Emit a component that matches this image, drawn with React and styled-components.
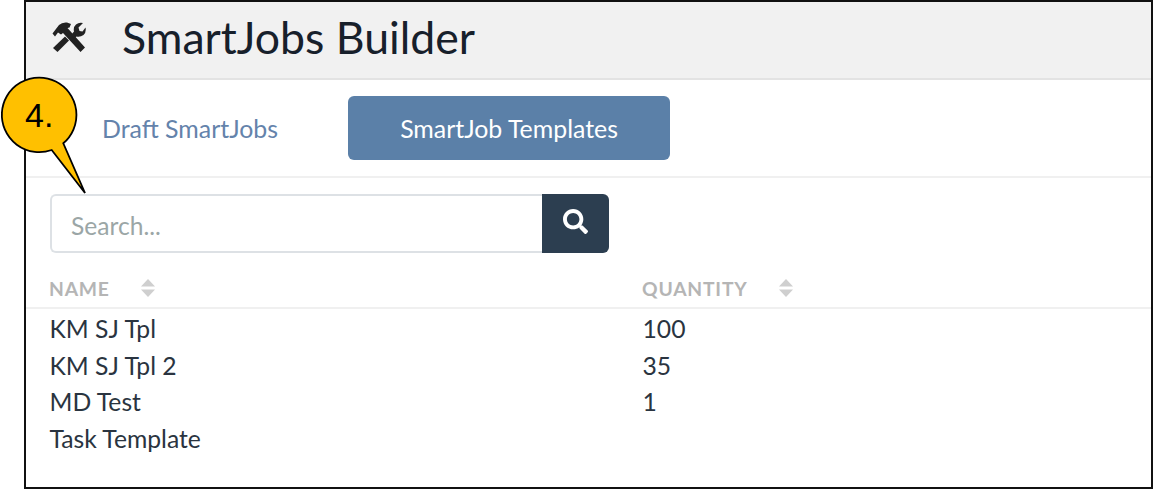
import React from "react";
import styled, { createGlobalStyle } from "styled-components";
import { FaSearch } from "react-icons/fa";

const Global = createGlobalStyle`
  html, body { margin: 0; padding: 0; background: #fff; }
  body { font-family: Lato, "Liberation Sans", sans-serif; }
`;
const Page = styled.div`
  position: relative;
  width: 1153px;
  height: 489px;
  padding-left: 24px;
  box-sizing: border-box;
  overflow: hidden;
`;
const Frame = styled.div`
  box-sizing: border-box;
  width: 1129px;
  height: 489px;
  border: 2px solid #111;
  background: #fff;
`;
const Header = styled.header`
  box-sizing: border-box;
  height: 78px;
  background: #f1f1f1;
  border-bottom: 2px solid #e3e3e3;
  display: flex;
  align-items: center;
  padding: 0 0 6px 26px;
  gap: 36px;
`;
const Title = styled.h1`
  margin: 0;
  font-weight: 400;
  font-size: 44.6px;
  line-height: 1;
  color: #17202b;
`;
const Tabs = styled.nav`
  box-sizing: border-box;
  height: 98px;
  border-bottom: 2px solid #f0f0f0;
  display: flex;
  align-items: center;
  padding-left: 76px;
  gap: 70px;
`;
const Tab = styled.button`
  border: 0;
  padding: 0;
  font: inherit;
  font-size: 24.9px;
  cursor: pointer;
  ${(p) =>
    p.$active
      ? `width: 322px; height: 64px; background: #5b80a8; color: #fff; border-radius: 6px;`
      : `background: transparent; color: #6483ab;`}
`;
const SearchRow = styled.form`
  display: flex;
  margin: 16px 0 0 24px;
  width: 559px;
  height: 59px;
`;
const Input = styled.input`
  box-sizing: border-box;
  flex: 1;
  min-width: 0;
  border: 2px solid #dde1e5;
  border-right: 0;
  border-radius: 6px 0 0 6px;
  padding: 3px 19px 0;
  font: inherit;
  font-size: 24.6px;
  color: #333;
  outline: none;
  &::placeholder { color: #9ba6a6; opacity: 1; }
`;
const SearchButton = styled.button`
  width: 67px;
  border: 0;
  padding: 0 0 4px;
  background: #2c3e50;
  color: #fff;
  border-radius: 0 6px 6px 0;
  display: flex;
  align-items: center;
  justify-content: center;
  font-size: 25px;
`;
const Table = styled.div`
  margin-top: 17px;
`;
const Head = styled.div`
  box-sizing: border-box;
  height: 39px;
  border-bottom: 2px solid #f0f0f0;
  display: grid;
  grid-template-columns: 593px 1fr;
  padding-left: 23px;
  align-items: center;
`;
const HeadCell = styled.div`
  display: flex;
  align-items: center;
  gap: 31px;
  font-size: 19.3px;
  font-weight: 700;
  letter-spacing: 0.8px;
  color: #b5b5b5;
  svg { margin-top: -2px; }
`;
const Row = styled.div`
  display: grid;
  grid-template-columns: 593px 1fr;
  padding-left: 23.5px;
  height: 36.7px;
  align-items: center;
  font-size: 24.7px;
  color: #2a3440;
`;
const Rows = styled.div`
  padding-top: 1px;
`;
const Callout = styled.svg`
  position: absolute;
  left: 0;
  top: 70px;
`;
const CalloutLabel = styled.span`
  position: absolute;
  left: 25px;
  top: 96px;
  font-family: "Liberation Sans", Arial, sans-serif;
  font-size: 34px;
  line-height: 38px;
  color: #000;
`;

const ToolsIcon = () => (
  <svg width="34" height="31" viewBox="0 0 34 31" fill="#222">
    <path d="M0.500 11.500 L7 3 Q10 0 15 0.500 L19 2 L17.500 5.500 L15.500 6 L33 25.500 L28.500 30 L11 11 L9 12.500 L6 10.500 L3 14.500 Z" />
    <path d="M1 26 L13 14.500 L17 18.500 L5.500 30 Z" />
    <path d="M19.500 12.500 L22 9.500 Q21 5 24 2.500 Q27 0 31 1 L26.500 5.500 L27.500 9 L30.500 9.500 L33.500 5.500 Q34.500 10 31.500 13 Q28 15.500 24.500 14.500 L22 17 Z" />
  </svg>
);
const SortIcon = () => (
  <svg width="14" height="18" viewBox="0 0 14 18" fill="#cfcfcf">
    <path d="M7 0 L14 7.500 H0 Z" />
    <path d="M0 10.500 H14 L7 18 Z" />
  </svg>
);

const rows = [
  ["KM SJ Tpl", "100"],
  ["KM SJ Tpl 2", "35"],
  ["MD Test", "1"],
  ["Task Template", ""],
];

export default function App() {
  return (
    <Page>
      <Global />
      <Frame>
        <Header>
          <ToolsIcon />
          <Title>SmartJobs Builder</Title>
        </Header>
        <Tabs>
          <Tab>Draft SmartJobs</Tab>
          <Tab $active>SmartJob Templates</Tab>
        </Tabs>
        <SearchRow onSubmit={(e) => e.preventDefault()}>
          <Input placeholder="Search..." />
          <SearchButton aria-label="Search"><FaSearch /></SearchButton>
        </SearchRow>
        <Table>
          <Head>
            <HeadCell>NAME <SortIcon /></HeadCell>
            <HeadCell>QUANTITY <SortIcon /></HeadCell>
          </Head>
          <Rows>
            {rows.map(([n, q]) => (
              <Row key={n}><div>{n}</div><div>{q}</div></Row>
            ))}
          </Rows>
        </Table>
      </Frame>
      <Callout width="100" height="130" viewBox="0 0 100 130">
        <path
          d="M63.300 73.300 A37.300 37.300 0 1 0 51.700 80 L85 123 Z"
          fill="#ffc000"
          stroke="#000"
          strokeWidth="1.800"
          strokeLinejoin="miter"
        />
      </Callout>
      <CalloutLabel>4.</CalloutLabel>
    </Page>
  );
}
